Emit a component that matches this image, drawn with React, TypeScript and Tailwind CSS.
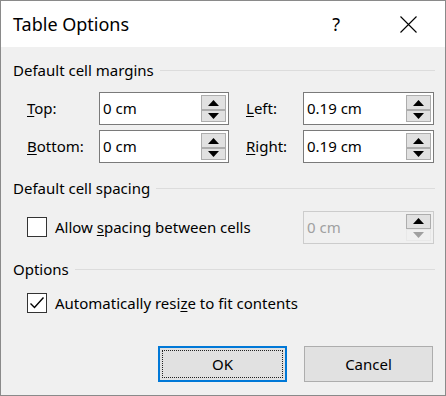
import React from 'react';

const font = { fontFamily: '"Noto Sans", "Segoe UI", Arial, sans-serif' };

function SectionHeader({ title }: { title: string }) {
  return (
    <div className="flex h-5 items-center">
      <span className="text-[15px] leading-5 text-black">{title}</span>
      <div className="ml-[6px] mr-[10px] h-px flex-1 bg-[#dcdcdc]" />
    </div>
  );
}

function Arrow({ up, disabled }: { up: boolean; disabled?: boolean }) {
  return (
    <svg width="11" height="6" viewBox="0 0 11 6">
      <polygon
        points={up ? '0,6 11,6 5.5,0' : '0,0 11,0 5.5,6'}
        fill={disabled ? '#a0a0a0' : '#000'}
      />
    </svg>
  );
}

function Spinner({
  value,
  width,
  disabled,
}: {
  value: string;
  width: string;
  disabled?: boolean;
}) {
  return (
    <div
      className={`flex h-[33px] ${width} items-stretch border ${
        disabled ? 'border-[#cccccc] bg-[#f0f0f0]' : 'border-[#7a7a7a] bg-white'
      }`}
    >
      <div
        className={`flex flex-1 items-center pl-[3px] text-[15px] ${
          disabled ? 'text-[#a0a0a0]' : 'text-black'
        }`}
      >
        {value}
      </div>
      <div className="my-[2px] mr-[2px] flex w-[25px] flex-col">
        <div className="flex h-[15px] items-center justify-center border border-[#adadad] bg-[#e1e1e1]">
          <Arrow up />
        </div>
        <div
          className={`flex flex-1 items-center justify-center border ${
            disabled
              ? 'border-[#e8e8e8] bg-[#f0f0f0]'
              : 'border-[#adadad] bg-[#e1e1e1]'
          }`}
        >
          <Arrow up={false} disabled={disabled} />
        </div>
      </div>
    </div>
  );
}

function Label({ pre, key_, post, width }: { pre?: string; key_: string; post: string; width: string }) {
  return (
    <span className={`${width} text-[15px] text-black`}>
      {pre}
      <span className="underline underline-offset-2">{key_}</span>
      {post}
    </span>
  );
}

function Checkbox({ checked }: { checked?: boolean }) {
  return (
    <div className="flex h-5 w-5 items-center justify-center border border-[#333333] bg-white">
      {checked && (
        <svg width="16" height="14" viewBox="0 0 16 14">
          <path d="M1.5 7.5 L5.5 11.5 L14.5 1.5" fill="none" stroke="#000" strokeWidth="1.4" />
        </svg>
      )}
    </div>
  );
}

export default function App() {
  return (
    <div
      className="flex h-[396px] w-[446px] flex-col overflow-hidden border border-[#8a8a8a] bg-[#f0f0f0]"
      style={font}
    >
      <div className="flex h-[46px] items-center bg-white pl-[12px]">
        <span className="flex-1 text-[18px] text-black">Table Options</span>
        <span className="mr-[60px] text-[18px] text-black">?</span>
        <svg width="17" height="17" viewBox="0 0 17 17" className="mr-[28px]">
          <path d="M0.5 0.5 L16.5 16.5 M16.5 0.5 L0.5 16.5" stroke="#000" strokeWidth="1.1" />
        </svg>
      </div>

      <div className="flex flex-col pl-[12px]">
        <div className="mt-[13px]">
          <SectionHeader title="Default cell margins" />
        </div>

        <div className="mt-[12px] flex flex-col gap-[5px] pl-[14px]">
          <div className="flex items-center">
            <Label key_="T" post="op:" width="w-[72px]" />
            <Spinner value="0 cm" width="w-[130px]" />
            <span className="w-[17px]" />
            <Label key_="L" post="eft:" width="w-[57px]" />
            <Spinner value="0.19 cm" width="w-[131px]" />
          </div>
          <div className="flex items-center">
            <Label key_="B" post="ottom:" width="w-[72px]" />
            <Spinner value="0 cm" width="w-[130px]" />
            <span className="w-[17px]" />
            <Label key_="R" post="ight:" width="w-[57px]" />
            <Spinner value="0.19 cm" width="w-[131px]" />
          </div>
        </div>

        <div className="mt-[15px]">
          <SectionHeader title="Default cell spacing" />
        </div>

        <div className="mt-[13px] flex h-[32px] items-center pl-[14px]">
          <Checkbox />
          <span className="ml-[8px] w-[248px] text-[15px] text-black">
            Allow <span className="underline underline-offset-2">s</span>pacing between cells
          </span>
          <Spinner value="0 cm" width="w-[131px]" disabled />
        </div>

        <div className="mt-[16px]">
          <SectionHeader title="Options" />
        </div>

        <div className="mt-[14px] flex h-5 items-center pl-[14px]">
          <Checkbox checked />
          <span className="ml-[8px] text-[15px] text-black">
            Automatically resi<span className="underline underline-offset-2">z</span>e to fit contents
          </span>
        </div>

        <div className="mt-[33px] flex justify-end gap-[17px] pr-[12px]">
          <button
            type="button"
            className="flex h-[36px] w-[129px] items-center justify-center border-2 border-[#0078d7] bg-[#e1e1e1] p-[2px]"
          >
            <span className="flex h-full w-full items-center justify-center border border-dotted border-[#222222] text-[15px] text-black">
              OK
            </span>
          </button>
          <button
            type="button"
            className="flex h-[36px] w-[129px] items-center justify-center border border-[#adadad] bg-[#e1e1e1] text-[15px] text-black"
          >
            Cancel
          </button>
        </div>
      </div>
    </div>
  );
}
